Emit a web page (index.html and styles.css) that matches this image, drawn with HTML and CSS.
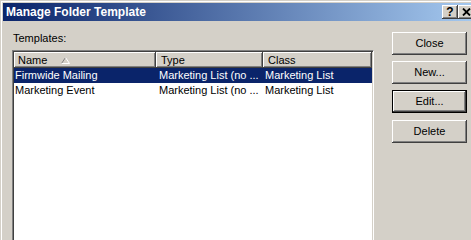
FILE: index.html
```html
<!DOCTYPE html>
<html lang="en">
<head>
    <meta charset="UTF-8">
    <title>Manage Folder Template</title>
    <link rel="stylesheet" href="styles.css">
</head>
<body>
    <div class="window">
        <div class="titlebar">
            <span class="title">Manage Folder Template</span>
            <div class="caption-btns">
                <button class="cap help">?</button>
                <button class="cap close">
                    <svg width="9" height="8" viewBox="0 0 9 8"><path d="M1 0.5 L8 7.5 M8 0.5 L1 7.5" stroke="#000" stroke-width="1.8"/></svg>
                </button>
            </div>
        </div>

        <div class="client">
            <div class="main">
                <div class="label">Templates:</div>
                <div class="listview">
                    <div class="header">
                        <div class="hcell col-name">Name
                            <svg class="sort" width="9" height="7" viewBox="0 0 9 7"><path d="M4.5 0.5 L0.5 6.5" stroke="#808080" fill="none"/><path d="M4.5 0.5 L8.5 6.5 M0.5 6.5 H8.5" stroke="#fff" fill="none"/></svg>
                        </div>
                        <div class="hcell col-type">Type</div>
                        <div class="hcell col-class">Class</div>
                    </div>
                    <div class="row selected">
                        <div class="cell col-name">Firmwide Mailing</div>
                        <div class="cell col-type">Marketing List (no ...</div>
                        <div class="cell col-class">Marketing List</div>
                    </div>
                    <div class="row">
                        <div class="cell col-name">Marketing Event</div>
                        <div class="cell col-type">Marketing List (no ...</div>
                        <div class="cell col-class">Marketing List</div>
                    </div>
                </div>
            </div>

            <div class="side">
                <button class="btn">Close</button>
                <button class="btn">New...</button>
                <button class="btn default">Edit...</button>
                <button class="btn delete">Delete</button>
            </div>
        </div>
    </div>
</body>
</html>
```

FILE: styles.css
```css
*{
    box-sizing: border-box;
}
body{
    margin: 0;
    background: #d4d0c8;
    font-family: "Liberation Sans", Arial, sans-serif;
    font-size: 11px;
    color: #000;
    overflow: hidden;
}
.window{
    width: 480px;
    height: 240px;
    border-top: 1px solid #d4d0c8;
    border-left: 1px solid #d4d0c8;
    padding: 2px 3px 0 2px;
    box-shadow: inset 1px 1px #fff;
    background: #d4d0c8;
}

/* title bar */
.titlebar{
    display: flex;
    align-items: center;
    height: 18px;
    padding: 0 3px 0 3px;
    background: linear-gradient(to right, #0a246a, #a6caf0);
}
.title{
    color: #fff;
    font-weight: bold;
    font-size: 12px;
}
.caption-btns{
    margin-left: auto;
    display: flex;
}
.cap{
    width: 16px;
    height: 14px;
    padding: 0;
    border: 0;
    background: #d4d0c8;
    box-shadow: inset -1px -1px #404040, inset 1px 1px #fff, inset -2px -2px #808080;
    display: flex;
    align-items: center;
    justify-content: center;
}
.help{
    font-family: "Liberation Sans", Arial, sans-serif;
    font-weight: bold;
    font-size: 12px;
    line-height: 14px;
    padding-bottom: 1px;
}
.close svg{
    display: block;
    margin-bottom: 1px;
}

/* client area */
.client{
    display: flex;
    align-items: flex-start;
    padding: 11px 0 0 9px;
}
.main{
    width: 362px;
}
.label{
    line-height: 13px;
    padding-left: 1px;
    margin-bottom: 5px;
}
.listview{
    width: 362px;
    height: 200px;
    background: #fff;
    border: 1px solid;
    border-color: #808080 #fff #fff #808080;
    padding: 1px;
    box-shadow: inset 1px 1px #404040, inset -1px -1px #d4d0c8;
}
.header{
    display: flex;
    height: 16px;
}
.hcell{
    display: flex;
    align-items: center;
    height: 16px;
    line-height: 16px;
    padding-left: 4px;
    background: #d4d0c8;
    box-shadow: inset -1px -1px #404040, inset 1px 1px #fff, inset -2px -2px #808080;
}
.hcell.col-type,
.hcell.col-class{
    padding-left: 5px;
}
.sort{
    display: block;
    margin-left: 14px;
}
.col-name{
    width: 142px;
}
.col-type{
    width: 107px;
}
.col-class{
    width: 109px;
}
.row{
    display: flex;
    height: 15px;
    line-height: 15px;
}
.row.selected{
    background: #0a246a;
    color: #fff;
}
.cell{
    white-space: nowrap;
    overflow: hidden;
    padding-left: 3px;
}
.cell.col-name{
    padding-left: 1px;
}
.cell.col-class{
    padding-left: 2px;
}

/* buttons */
.side{
    display: flex;
    flex-direction: column;
    gap: 6px;
    margin-left: 18px;
}
.btn{
    width: 75px;
    height: 23px;
    padding: 0 0 2px;
    border: 0;
    font-family: "Liberation Sans", Arial, sans-serif;
    font-size: 11px;
    color: #000;
    background: #d4d0c8;
    box-shadow: inset -1px -1px #404040, inset 1px 1px #fff, inset -2px -2px #808080;
}
.btn.default{
    border: 1px solid #000;
}
.btn.delete{
    margin-top: 1px;
}
```
